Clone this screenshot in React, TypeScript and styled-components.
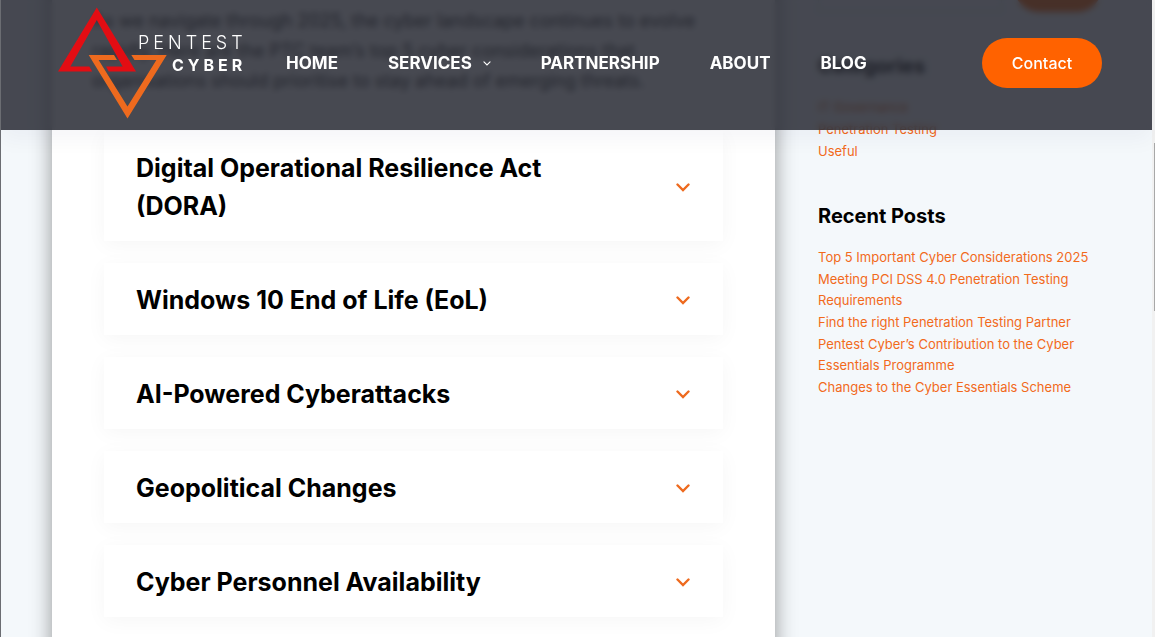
import React, { useState } from "react";
import styled, { createGlobalStyle } from "styled-components";

const GlobalStyle = createGlobalStyle`
  *, *::before, *::after { box-sizing: border-box; }
  body {
    margin: 0;
    background: #f4f8fb;
    color: #000;
    font-family: Inter, "Liberation Sans", sans-serif;
  }
  a { color: inherit; text-decoration: none; }
  button { font: inherit; cursor: pointer; }
`;

const Frame = styled.div`
  display: flex;
  height: 100vh;
  overflow: hidden;
  border-left: 1px solid #6b6d72;
`;

const Page = styled.div`
  position: relative;
  flex: 1;
  min-width: 0;
`;

const ScrollTrack = styled.div`
  flex: 0 0 3px;
  padding: 143px 0 0 2px;
  background: #f1f1f1;
`;

const ScrollThumb = styled.div`
  height: 168px;
  background: #a8a8a8;
`;

const Header = styled.header`
  position: absolute;
  inset: 0 0 auto 0;
  z-index: 2;
  display: flex;
  align-items: center;
  height: 130px;
  padding: 0 50px 4px 57px;
  background: rgba(36, 38, 48, 0.84);
  backdrop-filter: blur(3px);
  box-shadow: 0 10px 20px rgba(36, 38, 70, 0.04);
`;

const LogoLink = styled.a`
  display: block;
  height: 112px;
  margin-right: 40px;
`;

const Nav = styled.nav`
  display: flex;
  flex: 1;
  gap: 50px;
`;

const NavLink = styled.a`
  display: flex;
  align-items: center;
  gap: 11px;
  color: #fff;
  font-size: 17px;
  font-weight: 700;
  line-height: 24px;
`;

const PillButton = styled.button<{ $width: number }>`
  width: ${(p) => p.$width}px;
  height: 50px;
  border: 0;
  border-radius: 25px;
  background: #ff6200;
  color: #fff;
  font-size: 16px;
  font-weight: 500;
`;

const Content = styled.div`
  display: flex;
  gap: 43px;
  margin-top: -38px;
  padding: 0 50px 0 51px;
`;

const Article = styled.main`
  flex: 1;
  min-width: 0;
  padding: 44px 40px 60px;
  background: #fff;
  box-shadow: 0 0 20px rgba(0, 0, 0, 0.4);
`;

const Intro = styled.p`
  margin: 0 0 35px;
  font-size: 18px;
  line-height: 30px;
  color: #222;
`;

const Accordion = styled.div`
  display: flex;
  flex-direction: column;
  gap: 22px;
  margin: 0 12px;
`;

const ItemHeading = styled.h2`
  margin: 0;
  font-size: 25px;
  font-weight: 650;
  line-height: 38px;
`;

const ItemButton = styled.button`
  display: flex;
  align-items: center;
  justify-content: space-between;
  gap: 32px;
  width: 100%;
  padding: 18px 33px 16px 32px;
  border: 0;
  background: #fff;
  color: #000;
  text-align: left;
  box-shadow: 0 4px 20px rgba(0, 0, 0, 0.04);
`;

const ItemLabel = styled.span`
  max-width: 440px;
`;

const Sidebar = styled.aside`
  display: flex;
  flex: 0 0 284px;
  flex-direction: column;
  gap: 39px;
`;

const SearchForm = styled.form`
  display: flex;
  justify-content: space-between;
  gap: 12px;
`;

const SearchInput = styled.input`
  flex: 1;
  min-width: 0;
  height: 50px;
  border: 1px solid #e1e6ea;
  background: #f4f8fb;
`;

const WidgetTitle = styled.h3`
  margin: 0 0 16px;
  font-size: 20px;
  font-weight: 650;
  line-height: 30px;
`;

const LinkList = styled.ul`
  display: flex;
  flex-direction: column;
  gap: 1px;
  margin: 0;
  padding: 0;
  list-style: none;
  color: #f26a1b;
  font-size: 13px;
  line-height: 21px;
`;

function Logo() {
  return (
    <svg width="188" height="112" viewBox="58 7 188 112" role="img" aria-label="Pentest Cyber">
      <path
        fill="#e30d13"
        d="M96.8 7.5 L136 71.5 H108.8 L106 66.5 H122.6 L96.8 20 L70.4 66.5 H89.3 L92.2 71.5 H58 Z"
      />
      <path
        fill="#ee6a1e"
        d="M88.7 55 H114 L117 60 H98.6 L127.5 106.5 L156.4 60 H134.5 L131.3 55 H166.7 L127.5 118.5 Z"
      />
      <g fill="#fff" fontFamily="Inter, sans-serif">
        <text x="138" y="49" fontSize="18" fontWeight="300" letterSpacing="4">PENTEST</text>
        <text x="172" y="71" fontSize="16" fontWeight="700" letterSpacing="4">CYBER</text>
      </g>
    </svg>
  );
}

function Chevron({ width, height, stroke, weight }: { width: number; height: number; stroke: string; weight: number }) {
  return (
    <svg width={width} height={height} viewBox="0 0 14 9" fill="none" aria-hidden="true">
      <path d="M1.5 1.5 L7 7 L12.5 1.5" stroke={stroke} strokeWidth={weight} strokeLinecap="round" />
    </svg>
  );
}

const navItems = [
  { label: "HOME" },
  { label: "SERVICES", menu: true },
  { label: "PARTNERSHIP" },
  { label: "ABOUT" },
  { label: "BLOG" },
];

const topics = [
  "Digital Operational Resilience Act (DORA)",
  "Windows 10 End of Life (EoL)",
  "AI-Powered Cyberattacks",
  "Geopolitical Changes",
  "Cyber Personnel Availability",
];

const widgets = [
  { title: "Categories", links: ["IT Governance", "Penetration Testing", "Useful"] },
  {
    title: "Recent Posts",
    links: [
      "Top 5 Important Cyber Considerations 2025",
      "Meeting PCI DSS 4.0 Penetration Testing Requirements",
      "Find the right Penetration Testing Partner",
      "Pentest Cyber’s Contribution to the Cyber Essentials Programme",
      "Changes to the Cyber Essentials Scheme",
    ],
  },
];

export default function App() {
  const [open, setOpen] = useState<string | null>(null);

  return (
    <>
      <GlobalStyle />
      <Frame>
        <Page>
          <Header>
            <LogoLink href="#home"><Logo /></LogoLink>
            <Nav aria-label="Main">
              {navItems.map((item) => (
                <NavLink key={item.label} href={`#${item.label.toLowerCase()}`}>
                  {item.label}
                  {item.menu && <Chevron width={8} height={5} stroke="#fff" weight={2} />}
                </NavLink>
              ))}
            </Nav>
            <PillButton type="button" $width={120}>Contact</PillButton>
          </Header>
          <Content>
            <Article>
              <Intro>
                As we navigate through 2025, the cyber landscape continues to evolve
                rapidly. Here are the PTC team’s top 5 cyber considerations that
                organisations should prioritise to stay ahead of emerging threats.
              </Intro>
              <Accordion>
                {topics.map((topic) => (
                  <ItemHeading key={topic}>
                    <ItemButton
                      type="button"
                      aria-expanded={open === topic}
                      onClick={() => setOpen(open === topic ? null : topic)}
                    >
                      <ItemLabel>{topic}</ItemLabel>
                      <Chevron width={14} height={9} stroke="#ee6a1e" weight={2.4} />
                    </ItemButton>
                  </ItemHeading>
                ))}
              </Accordion>
            </Article>
            <Sidebar>
              <SearchForm>
                <SearchInput type="search" aria-label="Search" />
                <PillButton type="submit" $width={88}>Search</PillButton>
              </SearchForm>
              {widgets.map((widget) => (
                <section key={widget.title}>
                  <WidgetTitle>{widget.title}</WidgetTitle>
                  <LinkList>
                    {widget.links.map((link) => (
                      <li key={link}><a href="#post">{link}</a></li>
                    ))}
                  </LinkList>
                </section>
              ))}
            </Sidebar>
          </Content>
        </Page>
        <ScrollTrack><ScrollThumb /></ScrollTrack>
      </Frame>
    </>
  );
}
